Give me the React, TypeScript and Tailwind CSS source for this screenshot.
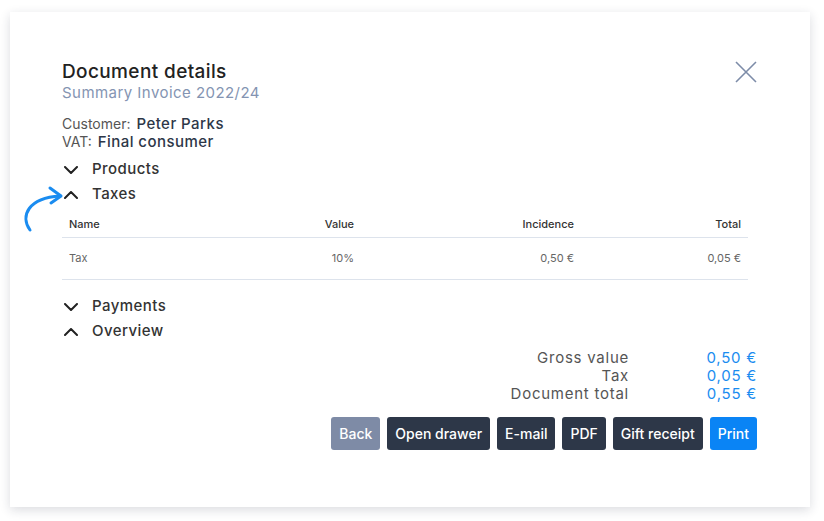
import { ReactNode } from "react";

const font = { fontFamily: "Inter, 'Noto Sans', sans-serif" };

function Chevron({ up }: { up?: boolean }) {
  return (
    <svg width="14" height="8" viewBox="0 0 14 8" fill="none" className="mt-[1px]">
      <polyline
        points={up ? "1,7 7,1 13,7" : "1,1 7,7 13,1"}
        stroke="#222"
        strokeWidth="2"
        strokeLinecap="round"
        strokeLinejoin="round"
      />
    </svg>
  );
}

function Section({ title, up }: { title: string; up?: boolean }) {
  return (
    <div className="flex h-[25px] items-center text-[15px] font-medium tracking-[0.03em] text-[#333]">
      <div className="flex w-[30px] justify-start pl-[2px]">
        <Chevron up={up} />
      </div>
      {title}
    </div>
  );
}

function Btn({ children, tone }: { children: ReactNode; tone: "back" | "dark" | "blue" }) {
  const bg = tone === "back" ? "bg-[#7e8ba6]" : tone === "blue" ? "bg-[#0a84f5]" : "bg-[#2d3748]";
  return (
    <button className={`h-[33px] rounded-[3px] px-[8px] text-[14px] font-medium text-white ${bg}`}>
      {children}
    </button>
  );
}

const cols = "grid grid-cols-[150px_149px_220px_167px]";

export default function App() {
  return (
    <div className="relative h-[521px] w-[824px] bg-white pl-[10px] pt-[12px]" style={font}>
      <div className="relative h-[495px] w-[800px] bg-white pl-[52px] pr-[53px] pt-[49px] shadow-[0_3px_10px_rgba(30,40,60,0.16)]">
        <div className="flex items-start justify-between">
          <div>
            <div className="text-[19px] font-medium leading-[22px] tracking-[0.02em] text-[#222]">Document details</div>
            <div className="text-[15px] leading-[20px] tracking-[0.03em] text-[#8494b2]">Summary Invoice 2022/24</div>
          </div>
          <svg width="22" height="22" viewBox="0 0 22 22">
            <path d="M1 1 L21 21 M21 1 L1 21" stroke="#7d8ca8" strokeWidth="1.6" />
          </svg>
        </div>

        <div className="mt-[12px] text-[14px] leading-[18px] text-[#555]">
          <div className="flex items-baseline">
            Customer:
            <span className="ml-[6px] text-[15px] font-medium tracking-[0.03em] text-[#2d3748]">Peter Parks</span>
          </div>
          <div className="flex items-baseline">
            VAT:
            <span className="ml-[6px] text-[15px] font-medium tracking-[0.03em] text-[#2d3748]">Final consumer</span>
          </div>
        </div>

        <div className="mt-[6px]">
          <Section title="Products" />
          <Section title="Taxes" up />
        </div>

        <div className="mt-[5px] w-[686px] text-[11px]">
          <div className={`${cols} h-[26px] items-center border-b border-[#dde3ec] font-medium text-[#333]`}>
            <div className="px-[7px]">Name</div>
            <div className="px-[7px] text-right">Value</div>
            <div className="px-[7px] text-right">Incidence</div>
            <div className="px-[7px] text-right">Total</div>
          </div>
          <div className={`${cols} h-[42px] items-center border-b border-[#dde3ec] text-[#666]`}>
            <div className="px-[7px]">Tax</div>
            <div className="px-[7px] text-right">10%</div>
            <div className="px-[7px] text-right">0,50 €</div>
            <div className="px-[7px] text-right">0,05 €</div>
          </div>
        </div>

        <div className="mt-[14px]">
          <Section title="Payments" />
          <Section title="Overview" up />
        </div>

        <div className="mt-[5px] flex justify-end">
          <div className="grid grid-cols-[auto_128px] text-[15px] leading-[18px] tracking-[0.05em]">
            <div className="text-right text-[#555]">Gross value</div>
            <div className="text-right text-[#1a8cf0]">0,50 €</div>
            <div className="text-right text-[#555]">Tax</div>
            <div className="text-right text-[#1a8cf0]">0,05 €</div>
            <div className="text-right text-[#555]">Document total</div>
            <div className="text-right text-[#1a8cf0]">0,55 €</div>
          </div>
        </div>

        <div className="mt-[14px] flex justify-end gap-[7px]">
          <Btn tone="back">Back</Btn>
          <Btn tone="dark">Open drawer</Btn>
          <Btn tone="dark">E-mail</Btn>
          <Btn tone="dark">PDF</Btn>
          <Btn tone="dark">Gift receipt</Btn>
          <Btn tone="blue">Print</Btn>
        </div>
      </div>

      <svg className="absolute left-[18px] top-[184px]" width="50" height="52" viewBox="0 0 50 52" fill="none">
        <path d="M12 46 C2 32, 10 14, 42 12" stroke="#1a8cf0" strokeWidth="3" strokeLinecap="round" />
        <path d="M32 4 L43 12 L33 19" stroke="#1a8cf0" strokeWidth="3" strokeLinecap="round" strokeLinejoin="round" />
      </svg>
    </div>
  );
}
